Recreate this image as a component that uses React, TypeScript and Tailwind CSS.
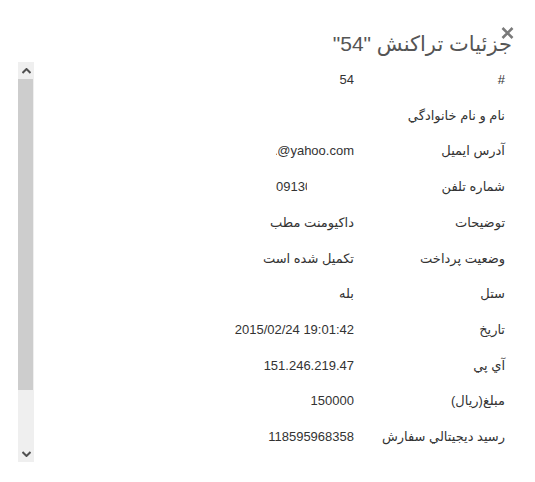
import { useState } from 'react';

type Row = { label: string; value: React.ReactNode };

function Clip({ ch }: { ch: string }) {
  return <span className="inline-block w-[2px] overflow-hidden align-bottom">{ch}</span>;
}

const rows: Row[] = [
  { label: '#', value: '54' },
  { label: 'نام و نام خانوادگي', value: '' },
  { label: 'آدرس ایمیل', value: <span dir="ltr"><Clip ch="." />@yahoo.com</span> },
  { label: 'شماره تلفن', value: <span dir="ltr" className="inline-block mr-[47px]">0913<Clip ch="0" /></span> },
  { label: 'توضیحات', value: 'داکیومنت مطب' },
  { label: 'وضعیت پرداخت', value: 'تکمیل شده است' },
  { label: 'ستل', value: 'بله' },
  { label: 'تاریخ', value: <span dir="ltr">2015/02/24 19:01:42</span> },
  { label: 'آي پي', value: '151.246.219.47' },
  { label: 'مبلغ(ريال)', value: '150000' },
  { label: 'رسيد ديجيتالي سفارش', value: '118595968358' },
];

function ScrollBar() {
  return (
    <div className="w-[16px] h-[400px] bg-[#efefef] flex flex-col items-stretch">
      <div className="h-[17px] flex items-center justify-center">
        <svg width="9" height="6" viewBox="0 0 9 6">
          <path d="M0.5 5 L4.5 1 L8.5 5" stroke="#505050" strokeWidth="2" fill="none" />
        </svg>
      </div>
      <div className="h-[311px] bg-[#cdcdcd] mr-[1px]" />
      <div className="flex-1" />
      <div className="h-[17px] flex items-center justify-center">
        <svg width="9" height="6" viewBox="0 0 9 6">
          <path d="M0.5 1 L4.5 5 L8.5 1" stroke="#505050" strokeWidth="2" fill="none" />
        </svg>
      </div>
    </div>
  );
}

export default function App() {
  const [open] = useState(true);
  if (!open) return null;

  return (
    <div className="w-[535px] h-[482px] bg-white relative overflow-hidden" style={{ fontFamily: '"Liberation Sans", "DejaVu Sans", Tahoma, sans-serif' }}>
      <button className="absolute left-[499px] top-[25px] w-[16px] h-[16px] flex items-center justify-center">
        <svg width="13" height="12" viewBox="0 0 13 12">
          <path d="M1.5 1 L11.5 11 M11.5 1 L1.5 11" stroke="#7a7a7a" strokeWidth="2.6" />
        </svg>
      </button>

      <div dir="rtl" className="pr-[23px] pt-[28px] h-[34px] box-content">
        <h4 className="text-[21px] leading-[32px] text-[#555]">جزئیات تراکنش "54"</h4>
      </div>

      <div className="flex flex-row pl-[18px]">
        <ScrollBar />
        <div dir="rtl" className="flex-1 pr-[30px] text-[13px] text-[#333]">
          {rows.map((r, i) => (
            <div key={i} className="flex h-[35.7px] items-center">
              <div className="w-[151px] shrink-0">{r.label}</div>
              <div>{r.value}</div>
            </div>
          ))}
        </div>
      </div>
    </div>
  );
}
